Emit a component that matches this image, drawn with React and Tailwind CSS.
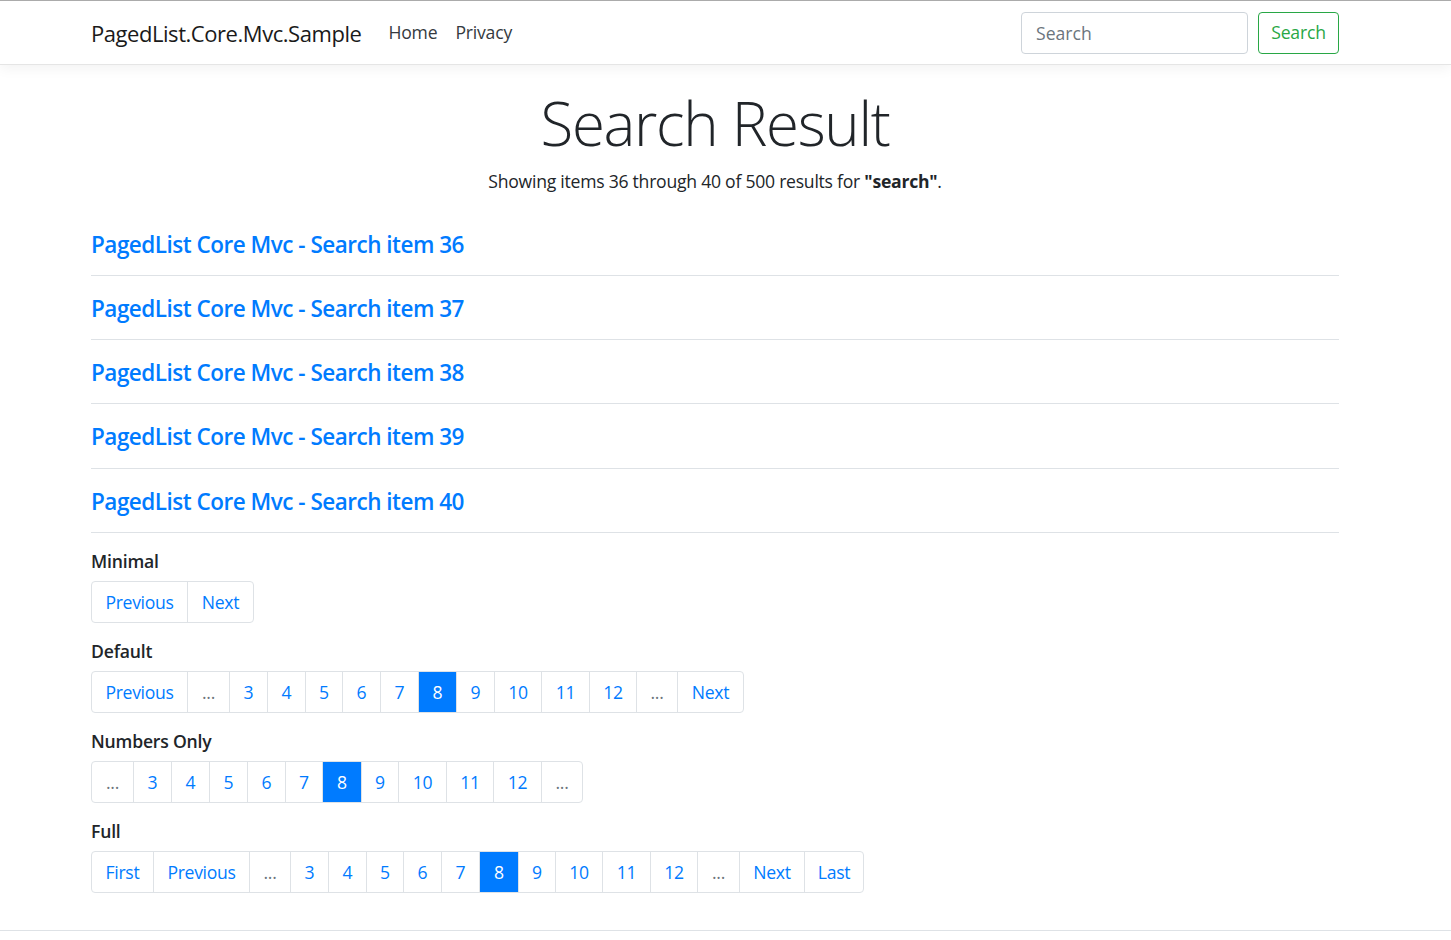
const pagers = [
  {
    label: 'Minimal',
    items: [
      { t: 'Previous', w: 95 },
      { t: 'Next', w: 66 },
    ],
  },
  {
    label: 'Default',
    items: [
      { t: 'Previous', w: 95 },
      { t: '...', w: 42, muted: true },
      { t: '3', w: 38 },
      { t: '4', w: 38 },
      { t: '5', w: 37 },
      { t: '6', w: 38 },
      { t: '7', w: 38 },
      { t: '8', w: 38, active: true },
      { t: '9', w: 38 },
      { t: '10', w: 47 },
      { t: '11', w: 48 },
      { t: '12', w: 47 },
      { t: '...', w: 41, muted: true },
      { t: 'Next', w: 66 },
    ],
  },
  {
    label: 'Numbers Only',
    items: [
      { t: '...', w: 41, muted: true },
      { t: '3', w: 38 },
      { t: '4', w: 38 },
      { t: '5', w: 38 },
      { t: '6', w: 38 },
      { t: '7', w: 37 },
      { t: '8', w: 39, active: true },
      { t: '9', w: 37 },
      { t: '10', w: 48 },
      { t: '11', w: 47 },
      { t: '12', w: 48 },
      { t: '...', w: 41, muted: true },
    ],
  },
  {
    label: 'Full',
    items: [
      { t: 'First', w: 61 },
      { t: 'Previous', w: 96 },
      { t: '...', w: 41, muted: true },
      { t: '3', w: 38 },
      { t: '4', w: 38 },
      { t: '5', w: 37 },
      { t: '6', w: 38 },
      { t: '7', w: 38 },
      { t: '8', w: 39, active: true },
      { t: '9', w: 37 },
      { t: '10', w: 47 },
      { t: '11', w: 48 },
      { t: '12', w: 47 },
      { t: '...', w: 42, muted: true },
      { t: 'Next', w: 65 },
      { t: 'Last', w: 59 },
    ],
  },
];

const results = [36, 37, 38, 39, 40];

function Pager({ items }) {
  return (
    <ul className="flex h-[42px] w-max rounded-[4px] border border-[#dee2e6]">
      {items.map((item, i) => (
        <li
          key={i}
          style={{ width: item.w }}
          className={
            'flex items-center justify-center text-[17.6px] leading-[22px] tracking-[-0.3px] ' +
            (i > 0 ? 'border-l border-[#dee2e6] ' : '') +
            (item.active
              ? 'bg-[#007bff] text-white'
              : item.muted
                ? 'text-[#6c757d]'
                : 'text-[#007bff]')
          }
        >
          {item.t}
        </li>
      ))}
    </ul>
  );
}

export default function App() {
  return (
    <div className="min-h-[940px] bg-white font-['Open_Sans','Liberation_Sans',sans-serif] text-[#212529]">
      <header className="border-t border-[#ababab] border-b border-b-[#e5e5e5] bg-white shadow-[0_4px_12px_rgba(0,0,0,0.05)]">
        <nav className="ml-[91px] flex h-[63px] w-[1248px] items-center">
          <a className="mr-[18px] text-[22px] leading-[30px] tracking-[-0.45px] text-[#1a1a1a]">
            PagedList.Core.Mvc.Sample
          </a>
          <a className="px-[9px] text-[17.6px] tracking-[-0.2px] text-[#343a40]">Home</a>
          <a className="px-[9px] text-[17.6px] tracking-[-0.2px] text-[#343a40]">Privacy</a>
          <form className="ml-auto flex items-center gap-[10px]">
            <input
              placeholder="Search"
              className="h-[42px] w-[227px] rounded-[4px] border border-[#ced4da] px-[14px] text-[17.6px] placeholder:text-[#6c757d] outline-none"
            />
            <button
              type="button"
              className="h-[42px] w-[81px] rounded-[4px] border border-[#28a745] text-[17.6px] tracking-[-0.2px] text-[#28a745]"
            >
              Search
            </button>
          </form>
        </nav>
      </header>

      <main className="ml-[91px] w-[1248px] pt-[21px]">
        <div className="text-center">
          <h1 className="text-[60px] font-light leading-[74px] tracking-[-1.3px]">Search Result</h1>
          <p className="mt-[8px] text-[17.6px] leading-[26px] tracking-[-0.25px]">
            Showing items 36 through 40 of 500 results for <b className="font-bold">"search"</b>.
          </p>
        </div>

        <div className="mt-[18px]">
          {results.map((n, i) => (
            <div
              key={n}
              className={
                'border-b border-[#dee2e6] pt-[20px] ' + (i === 3 ? 'pb-[18px]' : 'pb-[17px]')
              }
            >
              <a className="block text-[22.5px] font-semibold leading-[26px] tracking-[-0.5px] text-[#007bff]">
                PagedList Core Mvc - Search item {n}
              </a>
            </div>
          ))}
        </div>

        <div className="mt-[15px] flex flex-col gap-[15px] pb-[37px]">
          {pagers.map((p) => (
            <section key={p.label}>
              <h5 className="text-[17.6px] font-semibold leading-[26px] tracking-[-0.2px]">{p.label}</h5>
              <div className="mt-[7px]">
                <Pager items={p.items} />
              </div>
            </section>
          ))}
        </div>
      </main>

      <footer className="border-t border-[#dee2e6]" />
    </div>
  );
}
